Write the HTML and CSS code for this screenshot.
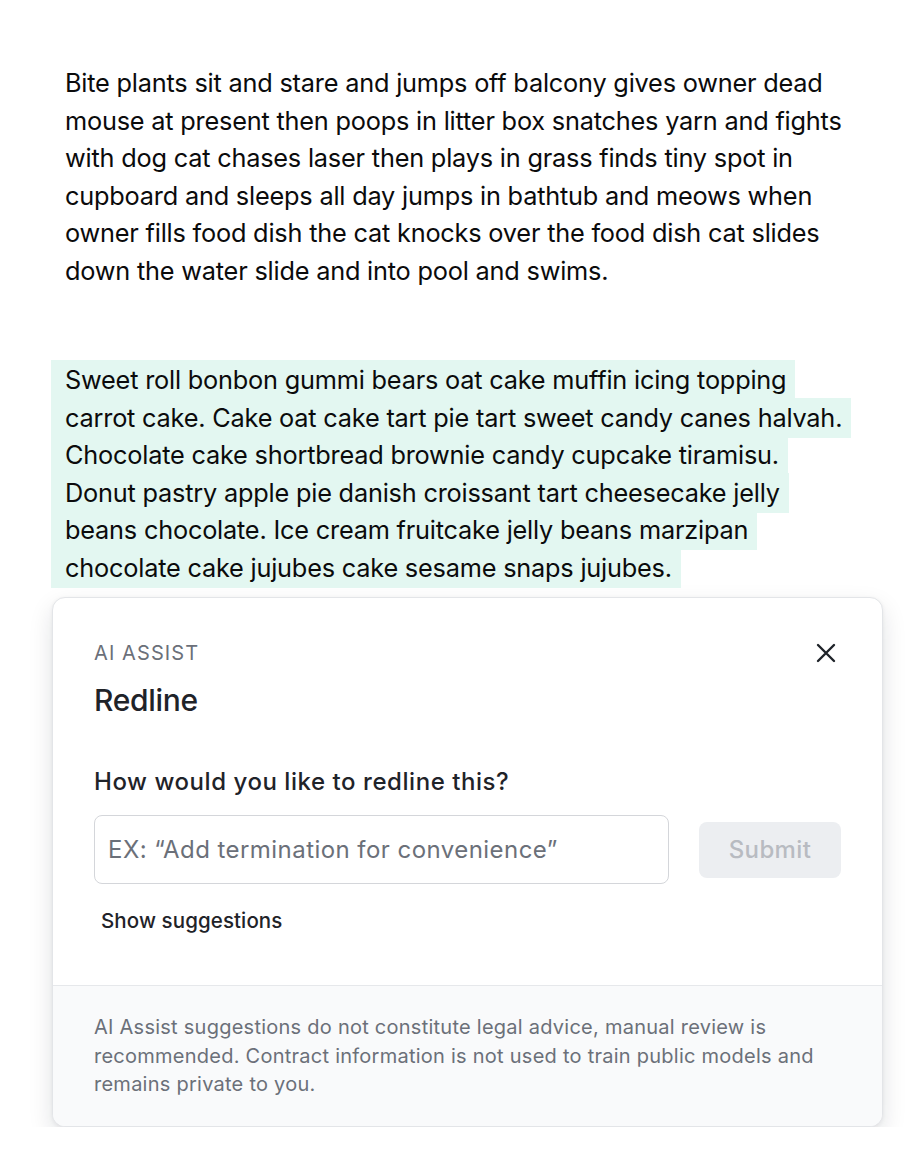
FILE: index.html
```html
<!DOCTYPE html>
<html lang="en">
<head>
<meta charset="utf-8">
<title>Redline</title>
<link rel="stylesheet" href="styles.css">
</head>
<body>
<main class="page">
  <p class="para">Bite plants sit and stare and jumps off balcony gives owner dead mouse at present then poops in litter box snatches yarn and fights with dog cat chases laser then plays in grass finds tiny spot in cupboard and sleeps all day jumps in bathtub and meows when owner fills food dish the cat knocks over the food dish cat slides down the water slide and into pool and swims.</p>
  <p class="para para-selected"><span class="highlight">Sweet roll bonbon gummi bears oat cake muffin icing topping carrot cake. Cake oat cake tart pie tart sweet candy canes halvah. Chocolate cake shortbread brownie candy cupcake tiramisu. Donut pastry apple pie danish croissant tart cheesecake jelly beans chocolate. Ice cream fruitcake jelly beans marzipan chocolate cake jujubes cake sesame snaps jujubes.</span></p>

  <section class="card">
    <div class="card-body">
      <div class="card-head">
        <div>
          <div class="eyebrow">AI ASSIST</div>
          <h2 class="title">Redline</h2>
        </div>
        <button class="close" aria-label="Close">
          <svg width="20" height="20" viewBox="0 0 20 20" fill="none" stroke="#1f2329" stroke-width="2.4" stroke-linecap="round"><path d="M2 2L18 18M18 2L2 18"/></svg>
        </button>
      </div>
      <label class="question" for="q">How would you like to redline this?</label>
      <div class="input-row">
        <input id="q" class="input" type="text" placeholder="EX: “Add termination for convenience”">
        <button class="submit" disabled>Submit</button>
      </div>
      <button class="suggest">Show suggestions</button>
    </div>
    <footer class="card-foot">AI Assist suggestions do not constitute legal advice, manual review is recommended. Contract information is not used to train public models and remains private to you.</footer>
  </section>
</main>
</body>
</html>
```
FILE: styles.css
```css
* { box-sizing: border-box; }
html, body { margin: 0; padding: 0; background: #ffffff; }
body {
  font-family: Inter, "Noto Sans", "Liberation Sans", sans-serif;
  color: #0b0b0c;
}
.page {
  padding: 64px 0 0 0;
}
.para {
  margin: 0 0 0 65px;
  width: 788px;
  font-size: 25.3px;
  line-height: 37.5px;
  letter-spacing: -0.2px;
}
.para-selected {
  margin-top: 72px;
}
.highlight {
  background: #e3f7f1;
  padding: 4px 9px 5px 14px;
  margin-left: -14px;
  -webkit-box-decoration-break: clone;
  box-decoration-break: clone;
}
.card {
  margin: 11px 0 0 52px;
  width: 831px;
  border: 1px solid #e3e5e8;
  border-radius: 13px;
  background: #ffffff;
  box-shadow: 0 10px 24px rgba(17, 24, 39, 0.12), 0 1px 4px rgba(17, 24, 39, 0.06);
  overflow: hidden;
}
.card-body {
  padding: 43px 41px 52px 41px;
}
.card-head {
  display: flex;
  justify-content: space-between;
  align-items: flex-start;
}
.eyebrow {
  font-size: 20px;
  line-height: 24px;
  letter-spacing: 1.1px;
  color: #6b7079;
}
.title {
  margin: 17px 0 0 0;
  font-size: 30px;
  line-height: 36px;
  font-weight: 500;
  color: #1f2329;
  letter-spacing: -0.3px;
}
.close {
  margin: 2px 5px 0 0;
  padding: 0;
  border: 0;
  background: none;
  width: 20px;
  height: 20px;
  display: flex;
}
.question {
  display: block;
  margin-top: 49px;
  font-size: 24px;
  line-height: 30px;
  font-weight: 500;
  color: #1f2329;
  letter-spacing: 0.55px;
}
.input-row {
  display: flex;
  align-items: center;
  gap: 30px;
  margin-top: 18px;
}
.input {
  width: 575px;
  height: 69px;
  border: 1.5px solid #d4d6da;
  border-radius: 8px;
  padding: 0 13px;
  font-family: inherit;
  font-size: 24px;
  color: #1f2329;
  letter-spacing: 0.45px;
  background: #fff;
}
.input::placeholder { color: #6b7079; }
.submit {
  width: 142px;
  height: 56px;
  border: 0;
  border-radius: 8px;
  background: #eceef1;
  color: #b8bbc1;
  font-family: inherit;
  font-size: 24px;
  font-weight: 500;
  letter-spacing: 0.4px;
}
.suggest {
  display: block;
  margin: 24px 0 0 7px;
  padding: 0;
  border: 0;
  background: none;
  font-family: inherit;
  font-size: 20.5px;
  line-height: 25px;
  font-weight: 500;
  color: #1f2329;
  letter-spacing: 0.1px;
}
.card-foot {
  border-top: 1.5px solid #e6e8eb;
  background: #f9fafb;
  padding: 27px 41px 27px 41px;
  font-size: 20px;
  line-height: 28.5px;
  color: #6b7079;
  letter-spacing: 0.25px;
}
```
